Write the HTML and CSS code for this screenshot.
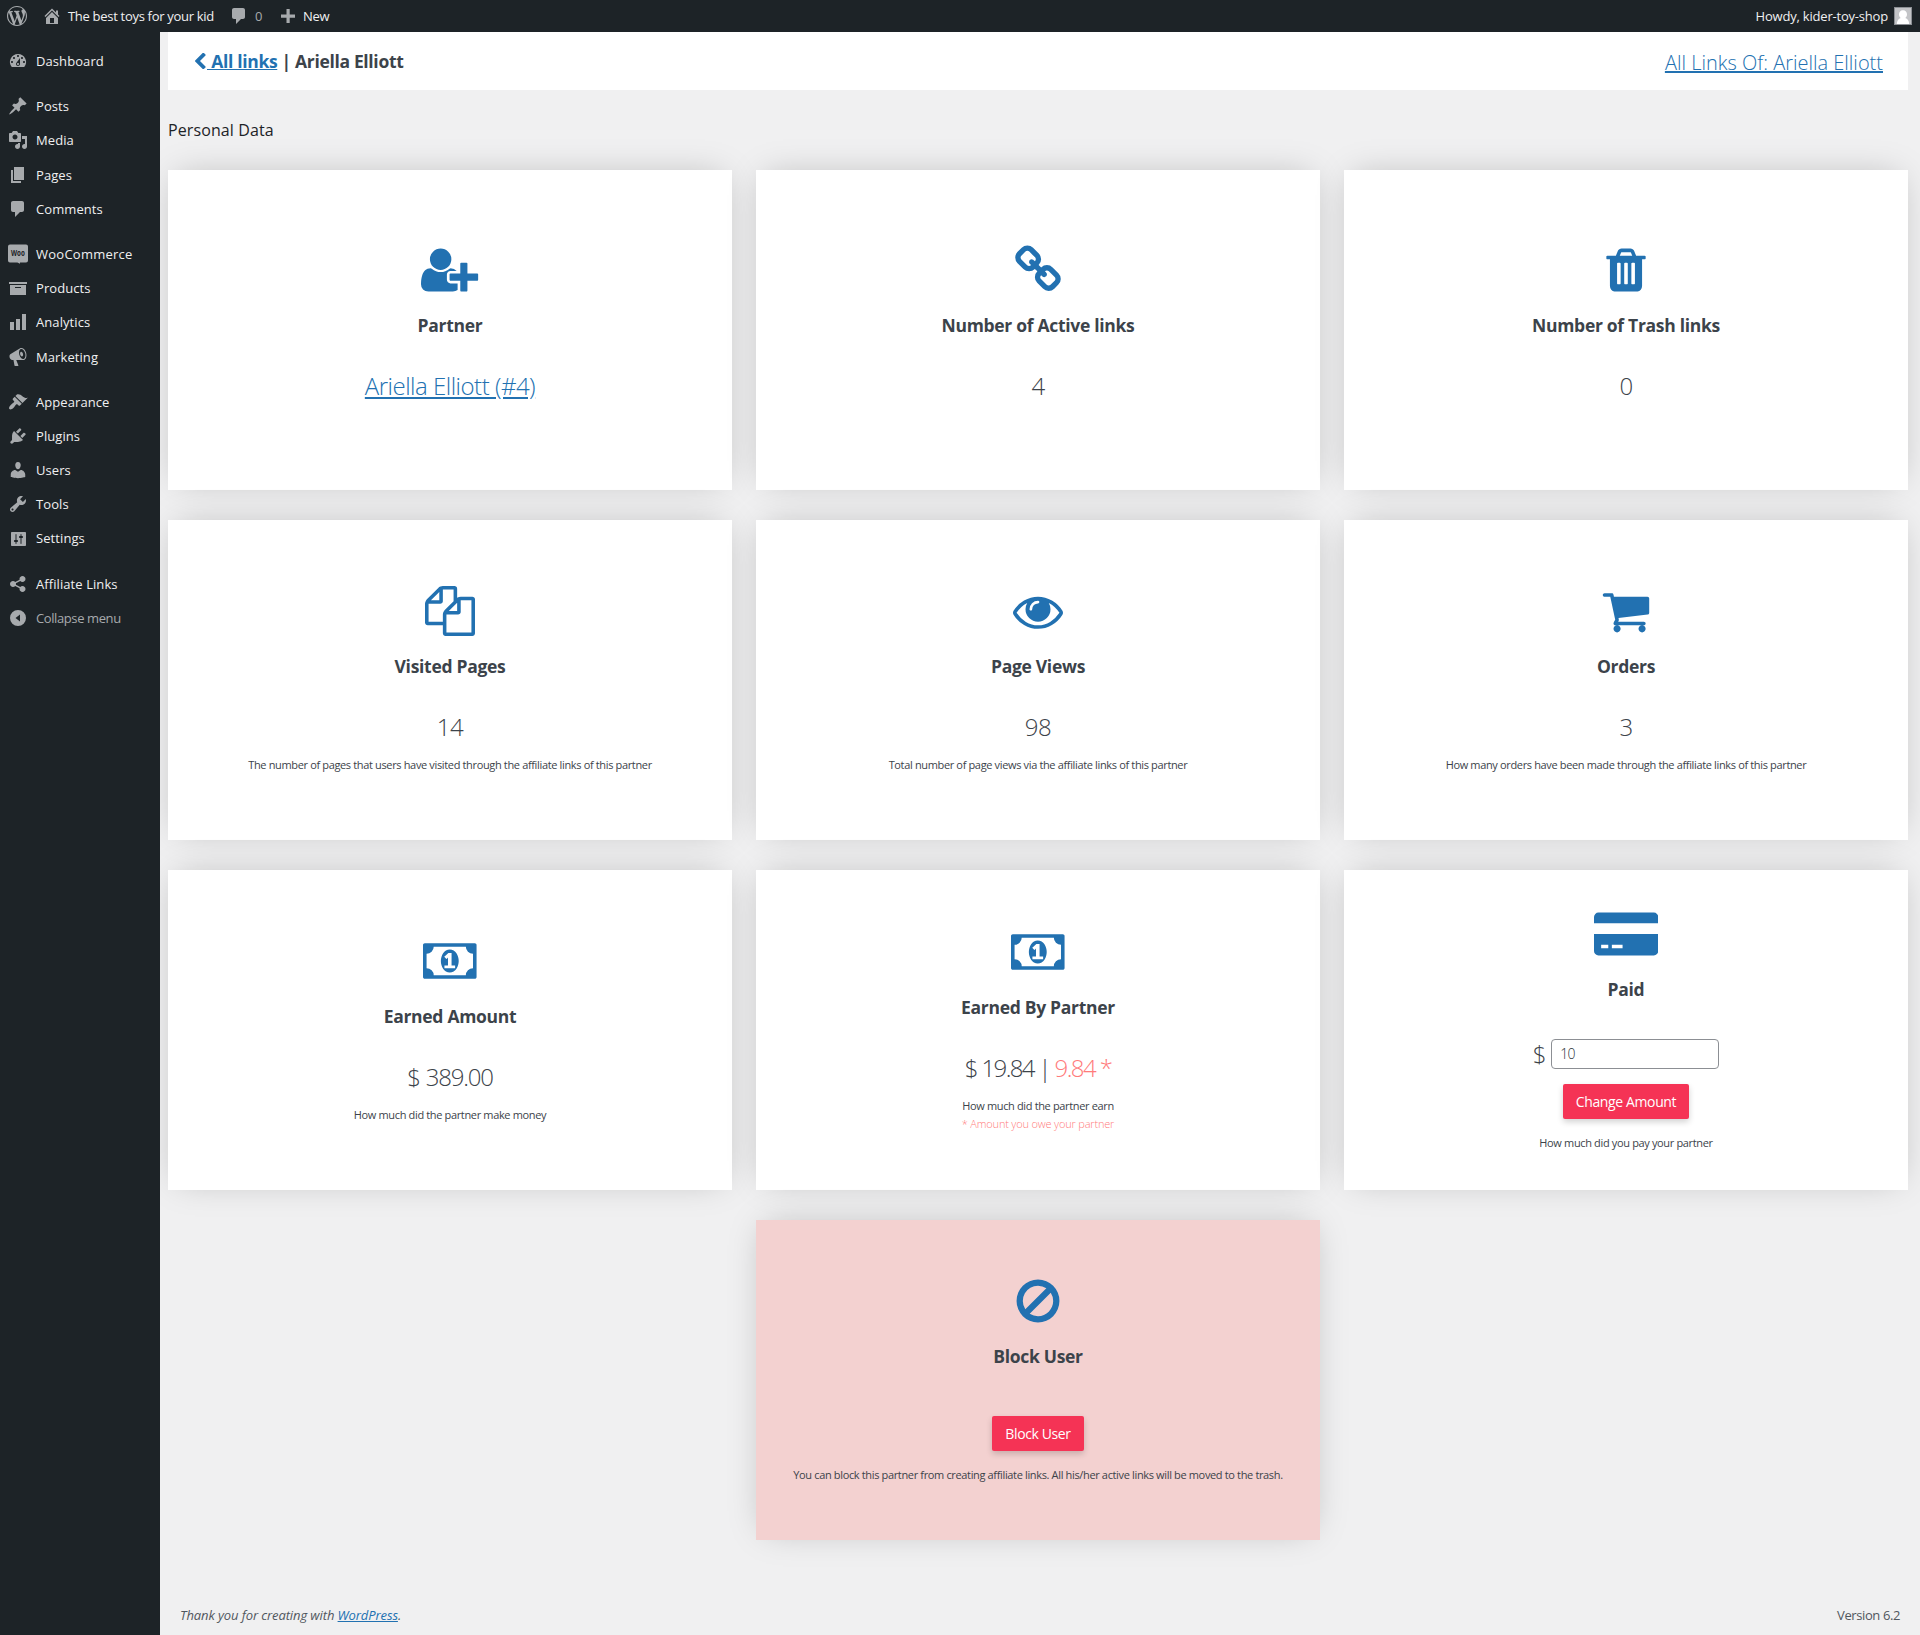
FILE: index.html
```html
<!DOCTYPE html>
<html lang="en">
<head>
<meta charset="utf-8">
<title>Ariella Elliott – Affiliate Links</title>
<link rel="stylesheet" href="styles.css">
</head>
<body>
<header class="adminbar">
  <a class="bar-item bar-logo"><svg class="dash" viewBox="0 0 20 20"><path d="M20 10c0-5.510-4.490-10-10-10C4.480 0 0 4.490 0 10c0 5.520 4.480 10 10 10 5.510 0 10-4.480 10-10zM7.780 15.370L4.370 6.220c.55-.02 1.170-.08 1.170-.08.5-.06.44-1.130-.06-1.110 0 0-1.450.11-2.370.11-.18 0-.37 0-.58-.01C4.120 2.690 6.870 1.110 10 1.110c2.330 0 4.450.87 6.050 2.340-.68-.11-1.650.39-1.650 1.580 0 .74.45 1.360.9 2.100.35.61.55 1.360.55 2.460 0 1.490-1.400 5-1.400 5l-3.030-8.370c.54-.02.82-.17.82-.17.5-.05.44-1.250-.06-1.220 0 0-1.440.12-2.380.12-.87 0-2.330-.12-2.330-.12-.5-.03-.56 1.200-.06 1.220l.92.08 1.260 3.410zM17.410 10c.24-.64.74-1.870.43-4.250.7 1.290 1.050 2.710 1.050 4.250 0 3.290-1.730 6.240-4.400 7.780.97-2.590 1.940-5.200 2.920-7.780zM6.100 18.090C3.120 16.650 1.110 13.530 1.110 10c0-1.300.23-2.480.72-3.590C3.250 10.300 4.670 14.200 6.100 18.090zm4.030-6.630l2.580 6.980c-.86.29-1.760.45-2.710.45-.79 0-1.570-.11-2.290-.33.81-2.380 1.620-4.740 2.420-7.100z"/></svg></a>
  <a class="bar-item bar-site"><svg class="dash" viewBox="0 0 20 20"><path fill-rule="evenodd" d="M16 8.500l1.530 1.530-1.060 1.060L10 4.600l-6.470 6.490-1.060-1.060L10 2.500l4 4v-2h2v4zm-6-2.460l6 5.990V18H4v-5.970zM12 17v-5H8v5h4z"/></svg><span>The best toys for your kid</span></a>
  <a class="bar-item bar-comments"><svg class="dash" viewBox="0 0 20 20"><path d="M5 2h9c1.100 0 2 .9 2 2v7c0 1.100-.9 2-2 2h-2l-5 5v-5H5c-1.100 0-2-.9-2-2V4c0-1.100.9-2 2-2z"/></svg><span>0</span></a>
  <a class="bar-item bar-new"><svg class="dash" viewBox="0 0 20 20"><path d="M17 8.500v3.200h-5.300V17H8.500v-5.300H3V8.500h5.500V3h3.200v5.500z"/></svg><span>New</span></a>
  <a class="bar-item bar-user"><span>Howdy, kider-toy-shop</span><svg class="avatar" viewBox="0 0 18 18"><path fill="#8c8f94" d="M0 0h18v18H0z"/><path fill="#c3c4c7" d="M1 1h16v16H1z"/><path fill="#fff" d="M9 3.300c2.500 0 4 1.700 4 4 0 1.600-.7 2.900-1.700 3.600 2.200.6 3.700 2.500 3.900 6.100H2.800c.2-3.600 1.700-5.500 3.900-6.100C5.700 10.200 5 8.900 5 7.300c0-2.300 1.500-4 4-4z"/></svg></a>
</header>
<div class="layout">
  <nav class="menu">
    <a class="menu-item"><svg class="dash" viewBox="0 0 20 20"><path fill-rule="evenodd" d="M3.760 16h12.480A7.998 7.998 0 0 0 10 3a7.998 7.998 0 0 0-6.240 13zM10 4c.55 0 1 .45 1 1s-.45 1-1 1-1-.45-1-1 .45-1 1-1zM6 6c.55 0 1 .45 1 1s-.45 1-1 1-1-.45-1-1 .45-1 1-1zm8 0c.55 0 1 .45 1 1s-.45 1-1 1-1-.45-1-1 .45-1 1-1zm-5.370 5.550L12 7v6c0 1.100-.9 2-2 2s-2-.9-2-2c0-.57.24-1.080.63-1.450zM4 10c.55 0 1 .45 1 1s-.45 1-1 1-1-.45-1-1 .45-1 1-1zm12 0c.55 0 1 .45 1 1s-.45 1-1 1-1-.45-1-1 .45-1 1-1zm-5 3c0-.55-.45-1-1-1s-1 .45-1 1 .45 1 1 1 1-.45 1-1z"/></svg><span>Dashboard</span></a>
    <a class="menu-item group-start"><svg class="dash" viewBox="0 0 20 20"><path d="M10.440 3.020l1.820-1.820 6.360 6.350-1.830 1.820c-1.050-.68-2.480-.57-3.410.36l-.75.75c-.92.93-1.040 2.350-.35 3.410l-1.830 1.820-2.410-2.410-2.800 2.790c-.42.42-3.380 2.710-3.800 2.290s1.860-3.390 2.280-3.810l2.790-2.790L4.100 9.360l1.830-1.820c1.050.69 2.480.57 3.400-.36l.75-.75c.93-.92 1.050-2.350.36-3.410z"/></svg><span>Posts</span></a>
    <a class="menu-item"><svg class="dash" viewBox="0 0 20 20"><path fill-rule="evenodd" d="M13 11V4c0-.55-.45-1-1-1h-1.670L9 1H5L3.670 3H2c-.55 0-1 .45-1 1v7c0 .55.45 1 1 1h10c.55 0 1-.45 1-1zM7 4.500c1.380 0 2.500 1.120 2.500 2.500S8.380 9.500 7 9.500 4.500 8.380 4.500 7 5.620 4.500 7 4.500zM14 6h5v10.500c0 1.380-1.120 2.500-2.500 2.500S14 17.880 14 16.500s1.120-2.500 2.500-2.500c.17 0 .34.02.5.05V9h-3V6zm-4 8.050V13h2v3.500c0 1.380-1.120 2.500-2.500 2.500S7 17.880 7 16.500 8.120 14 9.500 14c.17 0 .34.02.5.05z"/></svg><span>Media</span></a>
    <a class="menu-item"><svg class="dash" viewBox="0 0 20 20"><path d="M6 15V2h10v13H6zm-1 1h8v2H3V5h2v11z"/></svg><span>Pages</span></a>
    <a class="menu-item"><svg class="dash" viewBox="0 0 20 20"><path d="M5 2h9c1.100 0 2 .9 2 2v7c0 1.100-.9 2-2 2h-2l-5 5v-5H5c-1.100 0-2-.9-2-2V4c0-1.100.9-2 2-2z"/></svg><span>Comments</span></a>
    <a class="menu-item group-start"><svg class="dash" viewBox="0 0 20 20"><path d="M2 .5h16a2 2 0 0 1 2 2v14a2 2 0 0 1-2 2h-6v1.300l-2.600-1.300H2a2 2 0 0 1-2-2v-14a2 2 0 0 1 2-2z"/><text class="woo" x="10" y="11.800" textLength="14" lengthAdjust="spacingAndGlyphs">Woo</text></svg><span class="wide">WooCommerce</span></a>
    <a class="menu-item"><svg class="dash" viewBox="0 0 20 20"><path fill-rule="evenodd" d="M19 4v2H1V4h18zM2 7h16v10H2V7zm11 3V9H7v1h6z"/></svg><span>Products</span></a>
    <a class="menu-item"><svg class="dash" viewBox="0 0 20 20"><path d="M18 18V2h-4v16h4zm-6 0V7H8v11h4zm-6 0v-8H2v8h4z"/></svg><span>Analytics</span></a>
    <a class="menu-item"><svg class="dash" viewBox="0 0 20 20"><path fill-rule="evenodd" d="M18.150 5.940c.46 1.620.38 3.220-.02 4.480-.42 1.280-1.260 2.180-2.300 2.480-.16.06-.26.06-.4.060-.06.02-.12.02-.18.02-.06.02-.14.02-.22.02h-6.800l2.220 5.500c.02.14-.06.26-.14.34-.08.1-.24.16-.34.16H6.950c-.1 0-.26-.06-.34-.16-.08-.08-.16-.2-.14-.34l-1-5.500H4.250l-.02-.02c-.5.06-1.080-.18-1.540-.62s-.88-1.080-1.060-1.880c-.24-.8-.2-1.560-.02-2.200.18-.62.58-1.080 1.060-1.300l.02-.02 9-5.400c.1-.06.18-.1.24-.16.06-.04.14-.08.24-.12.16-.08.28-.12.5-.18 1.040-.3 2.240.1 3.220.98s1.840 2.240 2.260 3.860zm-2.580 5.980h-.02c.4-.1.740-.34 1.040-.7.580-.7.860-1.760.860-3.040 0-.64-.1-1.300-.28-1.980-.34-1.360-1.020-2.500-1.780-3.240s-1.680-1.100-2.460-.88c-.82.22-1.400.96-1.700 2-.32 1.040-.28 2.360.06 3.720.38 1.360 1 2.500 1.800 3.240.78.740 1.620 1.100 2.480.88zm-2.540-7.080c.22-.04.42-.02.62.04.38.16.76.48 1.020 1s.42 1.200.42 1.780c0 .3-.04.56-.12.8-.18.48-.44.84-.86.94-.34.1-.8-.06-1.140-.4s-.64-.86-.78-1.500c-.18-.62-.12-1.240.02-1.720s.48-.84.82-.94z"/></svg><span>Marketing</span></a>
    <a class="menu-item group-start"><svg class="dash" viewBox="0 0 20 20"><path d="M14.480 11.060L7.410 3.990l1.500-1.500c.5-.56 2.300-.47 3.510.32 1.210.8 1.430 1.280 2.910 2.100 1.180.64 2.450 1.260 4.450.85zm-.71.71L6.700 4.700 4.930 6.470c-.39.39-.39 1.020 0 1.410l1.060 1.060c.39.39.39 1.030 0 1.420-.6.6-1.430 1.110-2.210 1.690-.35.26-.7.53-1.010.84C1.430 14.230.4 16.080 1.400 17.070c.99 1 2.840-.03 4.180-1.360.31-.31.58-.66.85-1.020.57-.78 1.080-1.610 1.690-2.210.39-.39 1.020-.39 1.410 0l1.060 1.060c.39.39 1.020.39 1.410 0z"/></svg><span>Appearance</span></a>
    <a class="menu-item"><svg class="dash" viewBox="0 0 20 20"><path d="M13.110 4.360L9.870 7.600 8 5.730l3.240-3.240c.35-.34 1.050-.2 1.560.32.52.51.66 1.210.31 1.550zm-8 1.770l.91-1.120 9.010 9.010-1.190.84c-.71.71-2.630 1.160-3.820 1.160H6.140L4.900 17.260c-.59.59-1.540.59-2.120 0-.59-.58-.59-1.530 0-2.120l1.240-1.240v-3.880c0-1.130.4-3.190 1.090-3.890zm7.260 3.970l3.240-3.240c.34-.35 1.040-.21 1.550.31.52.51.66 1.210.31 1.550l-3.240 3.250z"/></svg><span>Plugins</span></a>
    <a class="menu-item"><svg class="dash" viewBox="0 0 20 20"><path d="M10 9.250c-2.270 0-2.730-3.440-2.730-3.440C7 4.020 7.820 2 9.970 2c2.160 0 2.980 2.020 2.710 3.810 0 0-.41 3.440-2.680 3.440zm0 2.570L12.720 10c2.390 0 4.520 2.330 4.520 4.530v2.490s-3.650 1.130-7.240 1.130c-3.650 0-7.240-1.130-7.240-1.130v-2.490c0-2.250 1.940-4.480 4.470-4.480z"/></svg><span>Users</span></a>
    <a class="menu-item"><svg class="dash" viewBox="0 0 20 20"><path fill-rule="evenodd" d="M16.680 9.770c-1.340 1.340-3.300 1.670-4.950.99l-5.410 6.520c-.99.99-2.590.99-3.580 0s-.99-2.590 0-3.570l6.520-5.420c-.68-1.650-.35-3.610.99-4.950 1.280-1.280 3.120-1.620 4.720-1.060l-2.890 2.890 2.820 2.820 2.860-2.870c.53 1.580.18 3.390-1.080 4.650zM3.810 16.210c.4.39 1.040.39 1.430 0 .4-.4.4-1.040 0-1.430-.39-.4-1.030-.4-1.430 0-.39.39-.39 1.030 0 1.430z"/></svg><span>Tools</span></a>
    <a class="menu-item"><svg class="dash" viewBox="0 0 20 20"><path fill-rule="evenodd" d="M18 16V4c0-.55-.45-1-1-1H4c-.55 0-1 .45-1 1v12c0 .55.45 1 1 1h13c.55 0 1-.45 1-1zM8 11h1c.55 0 1 .45 1 1s-.45 1-1 1H8.500v1.500c0 .28-.22.5-.5.5s-.5-.22-.5-.5V13H7c-.55 0-1-.45-1-1s.45-1 1-1h.5V5.500c0-.28.22-.5.5-.5s.5.22.5.5V11zm6-2h-.5v5.500c0 .28-.22.5-.5.5s-.5-.22-.5-.5V9H12c-.55 0-1-.45-1-1s.45-1 1-1h.5V5.500c0-.28.22-.5.5-.5s.5.22.5.5V7h.5c.55 0 1 .45 1 1s-.45 1-1 1z"/></svg><span>Settings</span></a>
    <a class="menu-item group-start"><svg class="dash" viewBox="0 0 20 20"><path d="M14.500 12c1.660 0 3 1.340 3 3s-1.340 3-3 3-3-1.340-3-3c0-.24.03-.46.09-.69l-4.380-2.300c-.55.61-1.330.99-2.210.99-1.660 0-3-1.340-3-3s1.340-3 3-3c.88 0 1.660.39 2.210.99l4.380-2.300c-.06-.23-.09-.45-.09-.69 0-1.660 1.340-3 3-3s3 1.340 3 3-1.340 3-3 3c-.88 0-1.660-.39-2.210-.99l-4.380 2.300c.06.23.09.45.09.69s-.03.46-.09.69l4.380 2.300c.55-.61 1.330-.99 2.210-.99z"/></svg><span>Affiliate Links</span></a>
    <a class="menu-item collapse"><svg class="dash" viewBox="0 0 20 20"><path fill-rule="evenodd" d="M10 2a8 8 0 1 1 0 16 8 8 0 0 1 0-16zm2 4.500L7.500 10l4.500 3.500z"/></svg><span>Collapse menu</span></a>
  </nav>
  <main class="content">
    <section class="page-head">
      <h1 class="crumb"><svg class="chevron" viewBox="346 60 1100 1550"><path d="M1427 301l-531 531 531 531q19 19 19 45t-19 45l-166 166q-19 19-45 19t-45-19l-742-742q-19-19-19-45t19-45l742-742q19-19 45-19t45 19l166 166q19 19 19 45t-19 45z"/></svg><a class="link">&nbsp;All links</a> | Ariella Elliott</h1>
      <a class="link head-link">All Links Of: Ariella Elliott</a>
    </section>
    <h2 class="section-title">Personal Data</h2>
    <div class="cards">
      <article class="card">
        <svg class="icon" viewBox="0 0 2048 1792"><path d="M704 896q-159 0-271.500-112.500t-112.500-271.500 112.500-271.500 271.500-112.500 271.500 112.500 112.500 271.500-112.500 271.500-271.500 112.500zm960 128h352q13 0 22.500 9.500t9.500 22.500v192q0 13-9.500 22.500t-22.500 9.500h-352v352q0 13-9.500 22.500t-22.500 9.500h-192q-13 0-22.500-9.500t-9.500-22.500v-352h-352q-13 0-22.500-9.500t-9.500-22.500v-192q0-13 9.500-22.500t22.500-9.500h352v-352q0-13 9.500-22.500t22.500-9.500h192q13 0 22.500 9.500t9.500 22.500v352zm-736 224q0 52 38 90t90 38h256v238q-68 50-171 50h-874q-121 0-194-69t-73-190q0-53 3.500-103.500t14-109 26.500-108.500 43-97.500 62-81 85.500-53.500 111.500-20q19 0 39 17 79 61 154.500 91.500t164.500 30.500 164.500-30.500 154.500-91.500q20-17 39-17 132 0 217 96h-223q-52 0-90 38t-38 90v192z"/></svg>
        <h3 class="card-title">Partner</h3>
        <div class="value"><a class="link">Ariella Elliott (#4)</a></div>
      </article>
      <article class="card">
        <svg class="icon" viewBox="0 0 1792 1792"><path d="M1520 1216q0-40-28-68l-208-208q-28-28-68-28-42 0-72 32 3 3 19 18.500t21.500 21.500 15 19 13 25.500 3.500 27.500q0 40-28 68t-68 28q-15 0-27.500-3.500t-25.500-13-19-15-21.500-21.500-18.500-19q-33 31-33 73 0 40 28 68l206 207q27 27 68 27 40 0 68-26l147-146q28-28 28-67zm-703-705q0-40-28-68l-206-207q-28-28-68-28-39 0-68 27l-147 146q-28 28-28 67 0 40 28 68l208 208q27 27 68 27 42 0 72-31-3-3-19-18.500t-21.500-21.500-15-19-13-25.500-3.500-27.500q0-40 28-68t68-28q15 0 27.500 3.500t25.500 13 19 15 21.500 21.500 18.500 19q33-31 33-73zm895 705q0 120-85 203l-147 146q-83 83-203 83-121 0-204-85l-206-207q-83-83-83-203 0-123 88-209l-88-88q-86 88-208 88-120 0-204-84l-208-208q-84-84-84-204t85-203l147-146q83-83 203-83 121 0 204 85l206 207q83 83 83 203 0 123-88 209l88 88q86-88 208-88 120 0 204 84l208 208q84 84 84 204z"/></svg>
        <h3 class="card-title">Number of Active links</h3>
        <div class="value">4</div>
      </article>
      <article class="card">
        <svg class="icon" viewBox="0 0 1792 1792"><path d="M704 1376v-704q0-14-9-23t-23-9h-64q-14 0-23 9t-9 23v704q0 14 9 23t23 9h64q14 0 23-9t9-23zm256 0v-704q0-14-9-23t-23-9h-64q-14 0-23 9t-9 23v704q0 14 9 23t23 9h64q14 0 23-9t9-23zm256 0v-704q0-14-9-23t-23-9h-64q-14 0-23 9t-9 23v704q0 14 9 23t23 9h64q14 0 23-9t9-23zm-544-992h448l-48-117q-7-9-17-11h-317q-10 2-17 11zm928 32v64q0 14-9 23t-23 9h-96v948q0 83-47 143.500t-113 60.500h-832q-66 0-113-58.500t-47-141.500v-952h-96q-14 0-23-9t-9-23v-64q0-14 9-23t23-9h309l70-167q15-37 54-63t79-26h320q40 0 79 26t54 63l70 167h309q14 0 23 9t9 23z"/></svg>
        <h3 class="card-title">Number of Trash links</h3>
        <div class="value">0</div>
      </article>
      <article class="card">
        <svg class="icon" viewBox="0 0 1792 1792"><path d="M1696 384q40 0 68 28t28 68v1216q0 40-28 68t-68 28h-960q-40 0-68-28t-28-68v-288h-544q-40 0-68-28t-28-68v-672q0-40 20-88t48-76l408-408q28-28 76-48t88-20h416q40 0 68 28t28 68v328q68-40 128-40h416zm-544 213l-299 299h299v-299zm-640-384l-299 299h299v-299zm196 647l316-316v-416h-384v416q0 40-28 68t-68 28h-416v640h512v-256q0-40 20-88t48-76zm956 804v-1152h-384v416q0 40-28 68t-68 28h-416v640h896z"/></svg>
        <h3 class="card-title">Visited Pages</h3>
        <div class="value">14</div>
        <p class="note">The number of pages that users have visited through the affiliate links of this partner</p>
      </article>
      <article class="card">
        <svg class="icon" viewBox="0 0 1792 1792"><path d="M1664 960q-152-236-381-353 61 104 61 225 0 185-131.500 316.500t-316.500 131.500-316.500-131.500-131.500-316.500q0-121 61-225-229 117-381 353 133 205 333.500 326.500t434.500 121.500 434.500-121.500 333.500-326.500zm-720-384q0-20-14-34t-34-14q-125 0-214.500 89.500t-89.500 214.500q0 20 14 34t34 14 34-14 14-34q0-86 61-147t147-61q20 0 34-14t14-34zm848 384q0 34-20 69-140 230-376.500 368.500t-499.500 138.500-499.500-139-376.500-368q-20-35-20-69t20-69q140-229 376.500-368t499.500-139 499.500 139 376.500 368q20 35 20 69z"/></svg>
        <h3 class="card-title">Page Views</h3>
        <div class="value">98</div>
        <p class="note">Total number of page views via the affiliate links of this partner</p>
      </article>
      <article class="card">
        <svg class="icon" viewBox="0 0 1792 1792"><path d="M704 1536q0 52-38 90t-90 38-90-38-38-90 38-90 90-38 90 38 38 90zm896 0q0 52-38 90t-90 38-90-38-38-90 38-90 90-38 90 38 38 90zm128-1088v512q0 24-16.500 42.500t-40.500 21.500l-1044 122q13 60 13 70 0 16-24 64h920q26 0 45 19t19 45-19 45-45 19h-1024q-26 0-45-19t-19-45q0-11 8-31.500t16-36 21.500-40 15.500-29.500l-177-823h-204q-26 0-45-19t-19-45 19-45 45-19h256q16 0 28.500 6.500t19.500 15.500 13 24.500 8 26 5.500 29.500 4.500 26h1201q26 0 45 19t19 45z"/></svg>
        <h3 class="card-title">Orders</h3>
        <div class="value">3</div>
        <p class="note">How many orders have been made through the affiliate links of this partner</p>
      </article>
      <article class="card">
        <svg class="icon" viewBox="0 0 1920 1792"><path d="M768 1152h384v-96h-128v-448h-114l-148 137 77 80q42-37 55-57h2v288h-128v96zm512-256q0 70-21 142t-59.500 134-101.500 101-138 39-138-39-101.500-101-59.500-134-21-142 21-142 59.500-134 101.500-101 138-39 138 39 101.500 101 59.500 134 21 142zm512 256v-512q-106 0-181-75t-75-181h-1152q0 106-75 181t-181 75v512q106 0 181 75t75 181h1152q0-106 75-181t181-75zm128-832v1152q0 26-19 45t-45 19h-1792q-26 0-45-19t-19-45v-1152q0-26 19-45t45-19h1792q26 0 45 19t19 45z"/></svg>
        <h3 class="card-title">Earned Amount</h3>
        <div class="value sum">$ 389.00</div>
        <p class="note">How much did the partner make money</p>
      </article>
      <article class="card">
        <svg class="icon" viewBox="0 0 1920 1792"><path d="M768 1152h384v-96h-128v-448h-114l-148 137 77 80q42-37 55-57h2v288h-128v96zm512-256q0 70-21 142t-59.500 134-101.500 101-138 39-138-39-101.500-101-59.500-134-21-142 21-142 59.500-134 101.500-101 138-39 138 39 101.500 101 59.500 134 21 142zm512 256v-512q-106 0-181-75t-75-181h-1152q0 106-75 181t-181 75v512q106 0 181 75t75 181h1152q0-106 75-181t181-75zm128-832v1152q0 26-19 45t-45 19h-1792q-26 0-45-19t-19-45v-1152q0-26 19-45t45-19h1792q26 0 45 19t19 45z"/></svg>
        <h3 class="card-title">Earned By Partner</h3>
        <div class="value sum sum-pair">$ 19.84 | <span class="owed">9.84 *</span></div>
        <p class="note">How much did the partner earn</p>
        <p class="note note-owed owed">* Amount you owe your partner</p>
      </article>
      <article class="card">
        <svg class="icon" viewBox="0 0 2304 1792"><path d="M0 1504v-608h2304v608q0 66-47 113t-113 47h-1984q-66 0-113-47t-47-113zm640-224v128h384v-128h-384zm-384 0v128h256v-128h-256zm1888-1152q66 0 113 47t47 113v224h-2304v-224q0-66 47-113t113-47h1984z"/></svg>
        <h3 class="card-title">Paid</h3>
        <form class="pay">
          <label class="amount">$ <input class="field" type="text" value="10"></label>
          <button class="btn" type="button">Change Amount</button>
        </form>
        <p class="note">How much did you pay your partner</p>
      </article>
      <article class="card card-danger">
        <svg class="icon" viewBox="0 0 1792 1792"><path d="M1440 893q0-161-87-295l-754 753q137 89 297 89 111 0 211.500-43.500t173.500-116.500 116-174.500 43-212.500zm-999 299l755-754q-135-91-300-91-148 0-273 73t-198 199-73 274q0 162 89 299zm1223-299q0 157-61 300t-163.500 246-245 164-298.500 61-298.500-61-245-164-163.500-246-61-300 61-299.500 163.500-245.500 245-164 298.500-61 298.500 61 245 164 163.500 245.500 61 299.500z"/></svg>
        <h3 class="card-title">Block User</h3>
        <form class="block"><button class="btn" type="button">Block User</button></form>
        <p class="note">You can block this partner from creating affiliate links. All his/her active links will be moved to the trash.</p>
      </article>
    </div>
    <footer class="footer"><em class="thanks">Thank you for creating with <a class="link">WordPress</a>.</em><span class="version">Version 6.2</span></footer>
  </main>
</div>
</body>
</html>
```
FILE: styles.css
```css
* { box-sizing: border-box; }
body {
  margin: 0;
  background: #f0f0f1;
  font: 13px/1.4 "Open Sans", "Noto Sans", sans-serif;
  font-stretch: 92%;
  color: #3c434a;
}
h1, h2, h3, p { margin: 0; }
svg { display: block; flex: none; }
.link { color: #2271b1; text-decoration: underline; }

.adminbar {
  display: flex;
  align-items: center;
  height: 32px;
  padding: 0 8px 0 7px;
  background: #1d2327;
  color: #f0f0f1;
  letter-spacing: -.3px;
}
.bar-item { display: flex; align-items: center; white-space: nowrap; }
.dash { width: 20px; height: 20px; fill: #a7aaad; }
.bar-site { margin-left: 15px; gap: 6px; }
.bar-comments { margin-left: 15px; gap: 6px; color: #a7aaad; }
.bar-new { margin-left: 16px; gap: 5px; }
.bar-user { margin-left: auto; gap: 6px; letter-spacing: -.2px; }
.avatar { width: 18px; height: 18px; }

.layout { display: flex; height: 1603px; }
.menu { position: relative; z-index: 1; width: 160px; flex: none; padding-top: 12px; background: #1d2327; }
.menu-item {
  display: flex;
  align-items: center;
  gap: 8px;
  height: 34.2px;
  padding-left: 8px;
  color: #f0f0f1;
  letter-spacing: .08px;
  white-space: nowrap;
}
.menu-item.group-start { margin-top: 11px; }
.menu-item.collapse { color: #a7aaad; letter-spacing: -.4px; }
.wide { letter-spacing: .25px; }
.woo { font: bold 8px "Open Sans", sans-serif; fill: #1d2327; text-anchor: middle; }

.content { flex: 1; display: flex; flex-direction: column; padding: 0 12px 0 8px; }
.page-head {
  display: flex;
  align-items: center;
  justify-content: space-between;
  height: 58px;
  padding: 2px 25px 0 26px;
  background: #fff;
}
.crumb { display: flex; align-items: center; padding-bottom: 2px; font-size: 17.5px; font-weight: 700; letter-spacing: -.33px; white-space: pre; }
.chevron { width: 12px; height: 16px; margin-right: 1px; fill: #2271b1; }
.head-link { font-size: 20px; font-weight: 300; padding-top: 2px; }
.section-title { margin-top: 28px; font-size: 16px; line-height: 24px; font-weight: 500; letter-spacing: .1px; color: #1d2327; }

.cards { display: grid; grid-template-columns: repeat(3, 1fr); gap: 30px 24px; margin-top: 28px; }
.card {
  display: flex;
  flex-direction: column;
  align-items: center;
  justify-content: center;
  height: 320px;
  background: #fff;
  box-shadow: 0 -2px 34px -10px rgba(0, 0, 0, .26);
}
.card-danger { grid-column: 2; background: #f3d1d0; }
.icon { height: 50px; fill: #2271b1; }
.card-title { margin-top: 18px; font-size: 17.5px; line-height: 25px; font-weight: 700; letter-spacing: -.3px; }
.value { margin-top: 20px; margin-bottom: 1px; height: 56px; font-size: 24px; line-height: 56px; font-weight: 300; letter-spacing: -.5px; }
.sum { letter-spacing: -1.2px; word-spacing: 1px; }
.sum-pair { letter-spacing: -1.6px; word-spacing: 0; }
.note { font-size: 11px; line-height: 18px; font-weight: 400; letter-spacing: -.35px; white-space: nowrap; }
.owed { color: #ff7b7b; font-weight: 300; }
.note-owed { letter-spacing: -.18px; }

.pay, .block { display: flex; flex-direction: column; align-items: center; padding-bottom: 15px; }
.pay { margin-top: 37px; gap: 15px; }
.block { margin-top: 47px; }
.amount { display: flex; align-items: center; gap: 6px; height: 30px; font-size: 24px; font-weight: 300; letter-spacing: -1px; }
.field {
  width: 168px;
  height: 30px;
  padding: 0 8px;
  border: 1px solid #8c8f94;
  border-radius: 4px;
  font: 300 14px "Open Sans", sans-serif;
  letter-spacing: -.8px;
  color: #2c3338;
}
.btn {
  height: 35px;
  padding: 0 13px;
  border: 0;
  border-radius: 2px;
  background: #f53355;
  box-shadow: 0 3px 6px rgba(0, 0, 0, .18);
  color: #fff;
  font: 14px "Open Sans", sans-serif;
  font-stretch: 92%;
  letter-spacing: -.38px;
}
.footer { display: flex; justify-content: space-between; margin-top: auto; padding: 10px 8px 11px 12px; color: #50575e; letter-spacing: -.1px; }
.version { letter-spacing: -.4px; }
```
